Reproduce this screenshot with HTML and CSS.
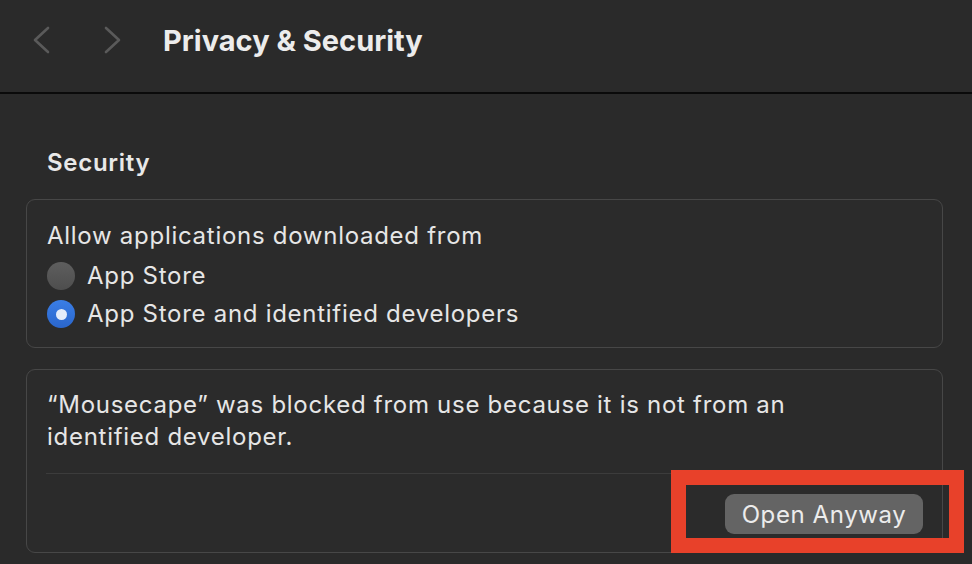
FILE: index.html
```html
<!DOCTYPE html>
<html lang="en">
<head>
    <meta charset="UTF-8">
    <meta name="viewport" content="width=device-width, initial-scale=1.0">
    <title>Privacy &amp; Security</title>
    <link rel="stylesheet" href="styles.css">
</head>

<body>
    <header class="toolbar">
        <div class="nav-buttons">
            <svg class="chevron" width="18" height="28" viewBox="0 0 18 28">
                <path d="M16 2 L3 14 L16 26" fill="none" stroke="#5a5a5a" stroke-width="2.6" stroke-linecap="round" stroke-linejoin="round"/>
            </svg>
            <svg class="chevron" width="18" height="28" viewBox="0 0 18 28">
                <path d="M2 2 L15 14 L2 26" fill="none" stroke="#5a5a5a" stroke-width="2.6" stroke-linecap="round" stroke-linejoin="round"/>
            </svg>
        </div>
        <h1 class="title">Privacy &amp; Security</h1>
    </header>

    <main class="content">
        <h2 class="section-title">Security</h2>

        <div class="group">
            <div class="row">Allow applications downloaded from</div>
            <label class="row radio-row">
                <span class="radio"></span>
                App Store
            </label>
            <label class="row radio-row">
                <span class="radio checked"></span>
                App Store and identified developers
            </label>
        </div>

        <div class="group blocked">
            <p class="message">“Mousecape” was blocked from use because it is not from an<br>identified developer.</p>
            <div class="separator"></div>
            <div class="actions">
                <button class="btn">Open Anyway</button>
            </div>
        </div>
    </main>

    <div class="highlight"></div>
</body>
</html>
```

FILE: styles.css
```css
* {
    margin: 0;
    padding: 0;
    box-sizing: border-box;
}

body {
    background: #2a2a2a;
    color: #e6e6e6;
    font-family: "Inter", "Noto Sans", sans-serif;
    position: relative;
    width: 972px;
    height: 564px;
    overflow: hidden;
}

.toolbar {
    height: 94px;
    display: flex;
    align-items: center;
    border-bottom: 2px solid #0a0a0a;
    padding-left: 32px;
    padding-bottom: 12px;
}

.nav-buttons {
    display: flex;
    gap: 54px;
    align-items: center;
}

.title {
    margin-left: 41px;
    font-size: 29px;
    font-weight: 700;
    color: #ececec;
    letter-spacing: 0;
}

.content {
    padding: 54px 29px 0 26px;
}

.section-title {
    font-size: 24px;
    font-weight: 600;
    line-height: 30px;
    padding-left: 21px;
    margin-bottom: 21px;
    color: #e8e8e8;
    letter-spacing: 0.7px;
}

.group {
    border: 1px solid #474747;
    border-radius: 9px;
    background: #2b2b2b;
    padding: 17px 20px 16px 20px;
}

.row {
    font-size: 24px;
    line-height: 38px;
    letter-spacing: 0.72px;
    display: flex;
    align-items: center;
}

.radio-row {
    gap: 12px;
    padding-top: 2px;
    margin-bottom: -2px;
}

.radio {
    width: 28px;
    height: 28px;
    border-radius: 50%;
    background: linear-gradient(#5e5e5e, #4e4e4e);
    display: inline-block;
    position: relative;
}

.radio.checked {
    background: linear-gradient(#3a7ee6, #2a66cc);
}

.radio.checked::after {
    content: "";
    position: absolute;
    width: 11px;
    height: 11px;
    border-radius: 50%;
    background: #e4ecfa;
    left: 8.5px;
    top: 8.5px;
}

.blocked {
    margin-top: 21px;
    padding: 19px 0 18px 0;
}

.message {
    font-size: 24px;
    line-height: 32px;
    letter-spacing: 0.72px;
    padding: 0 20px;
}

.separator {
    height: 1px;
    background: #3c3c3c;
    margin: 20px 0 20px 19px;
}

.actions {
    display: flex;
    justify-content: flex-end;
    padding-right: 19px;
}

.btn {
    width: 198px;
    height: 40px;
    border-radius: 9px;
    background: #646464;
    color: #ececec;
    font-family: "Inter", "Noto Sans", sans-serif;
    font-size: 24px;
    letter-spacing: 0.6px;
    border: none;
}

.highlight {
    position: absolute;
    left: 671px;
    top: 470px;
    width: 293px;
    height: 83px;
    border: 15px solid #e8412a;
}
```
